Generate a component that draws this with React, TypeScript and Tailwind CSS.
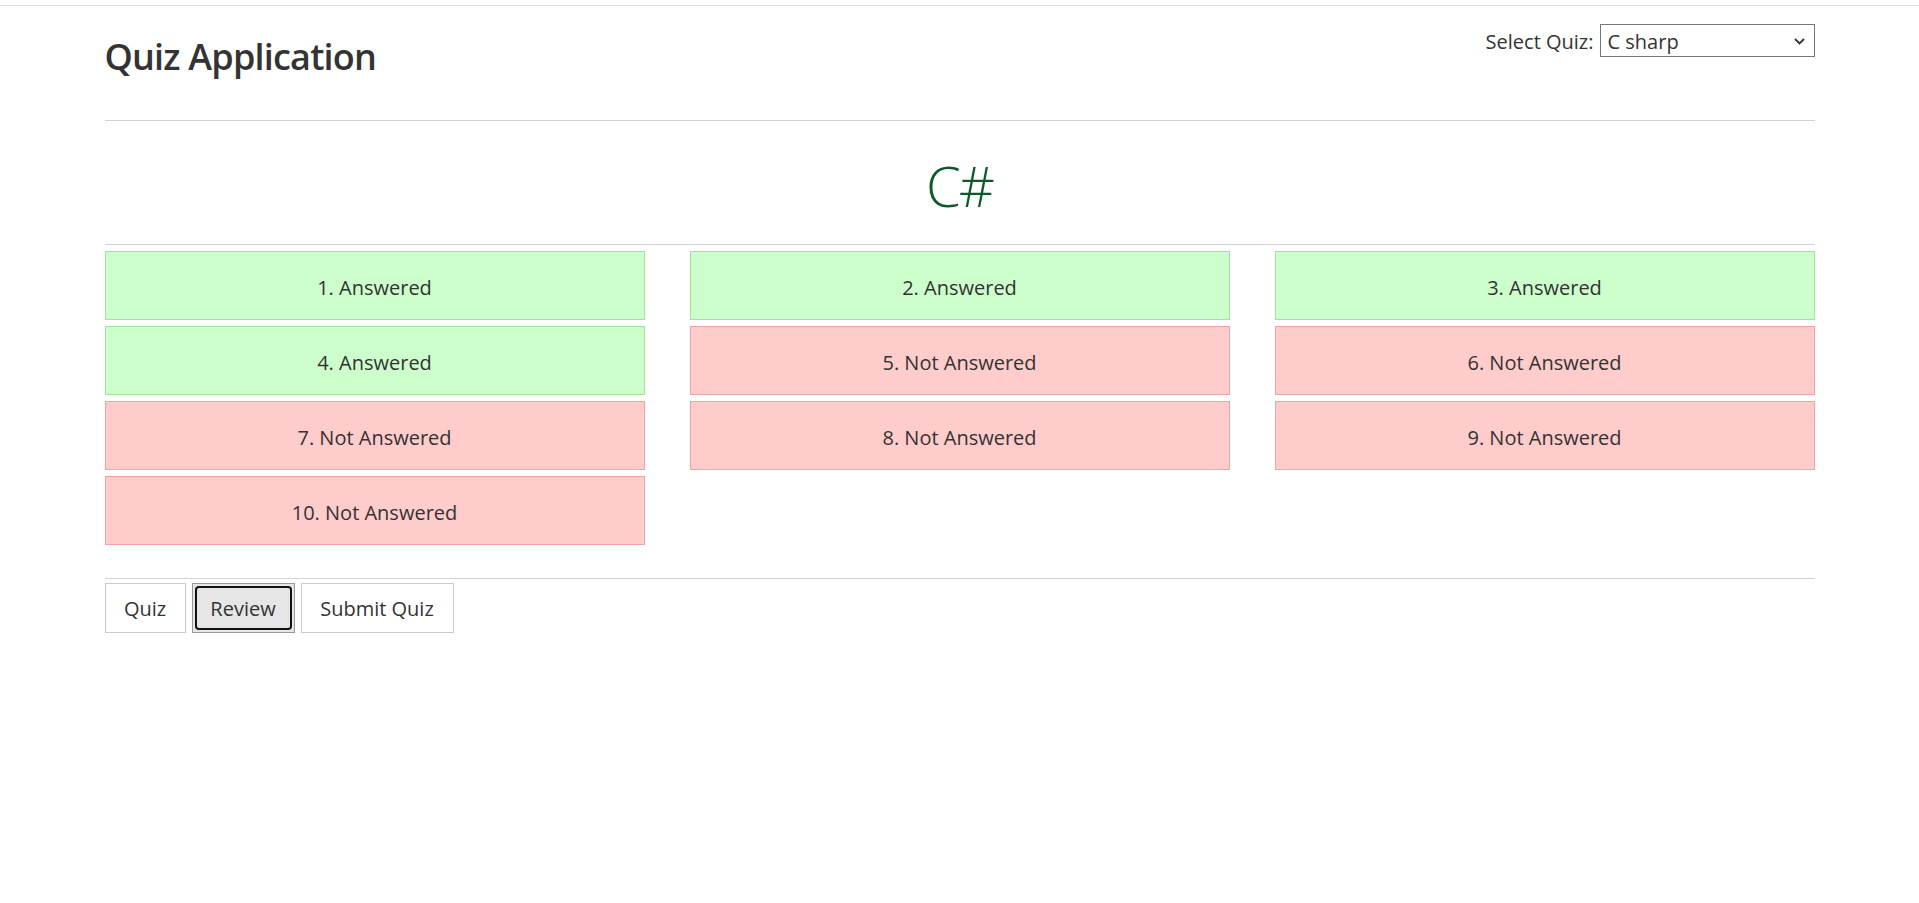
import { useState } from "react";

const questions = [
  { id: 1, answered: true },
  { id: 2, answered: true },
  { id: 3, answered: true },
  { id: 4, answered: true },
  { id: 5, answered: false },
  { id: 6, answered: false },
  { id: 7, answered: false },
  { id: 8, answered: false },
  { id: 9, answered: false },
  { id: 10, answered: false },
];

export default function App() {
  const [quiz, setQuiz] = useState("csharp");

  return (
    <div className="min-h-screen bg-white text-[#333] font-['Open_Sans',sans-serif]">
      <div className="mt-[5px] border-t border-[#dddddd]">
        <div className="mx-auto w-[1710px]">
          {/* Header */}
          <header className="flex h-[115px] items-start justify-between border-b border-[#d3d3d3]">
            <h1 className="mt-[28px] text-[36px] font-semibold leading-[46px] tracking-[-0.8px] text-[#333]">
              Quiz Application
            </h1>
            <div className="mt-[18px] flex items-start gap-[6px]">
              <label htmlFor="quiz" className="h-[33px] pt-[2px] text-[20px] leading-[31px]">
                Select Quiz:
              </label>
              <div className="relative">
                <select
                  id="quiz"
                  value={quiz}
                  onChange={(e) => setQuiz(e.target.value)}
                  className="h-[33px] w-[215px] appearance-none border border-[#767676] bg-white pl-[7px] pt-[2px] text-[20px] leading-[29px] text-[#333] outline-none"
                >
                  <option value="csharp">C sharp</option>
                  <option value="java">Java</option>
                  <option value="js">JavaScript</option>
                </select>
                <svg
                  className="pointer-events-none absolute right-[10px] top-[12px] h-[10px] w-[11px]"
                  viewBox="0 0 11 10"
                  fill="none"
                >
                  <path d="M1 3l4.5 4.5L10 3" stroke="#333" strokeWidth="1.8" />
                </svg>
              </div>
            </div>
          </header>

          {/* Quiz title */}
          <div className="flex h-[124px] items-center justify-center border-b border-[#d3d3d3] pt-[5px]">
            <h2 className="text-[56px] font-light leading-[64px] tracking-[-2px] text-[#0e5a2b]">C#</h2>
          </div>

          {/* Review grid */}
          <div className="mt-[6px] grid grid-cols-3 gap-x-[45px] gap-y-[6px]">
            {questions.map((q) => (
              <div
                key={q.id}
                className={`flex h-[69px] items-center justify-center border pt-[5px] text-[20px] ${
                  q.answered ? "border-[#9de59d] bg-[#ccffcc]" : "border-[#f0a3a3] bg-[#ffcccc]"
                }`}
              >
                {q.id}. {q.answered ? "Answered" : "Not Answered"}
              </div>
            ))}
          </div>

          {/* Actions */}
          <div className="mt-[33px] border-t border-[#d3d3d3] pt-[4px]">
            <div className="flex gap-[6px]">
              <button className="h-[50px] w-[81px] border border-[#cccccc] bg-white pt-[2px] text-[20px] text-[#333]">
                Quiz
              </button>
              <button className="h-[50px] w-[103px] border border-[#999999] bg-[#e6e6e6] p-[2px] text-[20px] text-[#333]">
                <span className="flex h-full w-full items-center justify-center rounded-[4px] border-2 border-[#111] pt-[2px]">
                  Review
                </span>
              </button>
              <button className="h-[50px] w-[153px] border border-[#cccccc] bg-white pt-[2px] text-[20px] text-[#333]">
                Submit Quiz
              </button>
            </div>
          </div>
        </div>
      </div>
    </div>
  );
}
